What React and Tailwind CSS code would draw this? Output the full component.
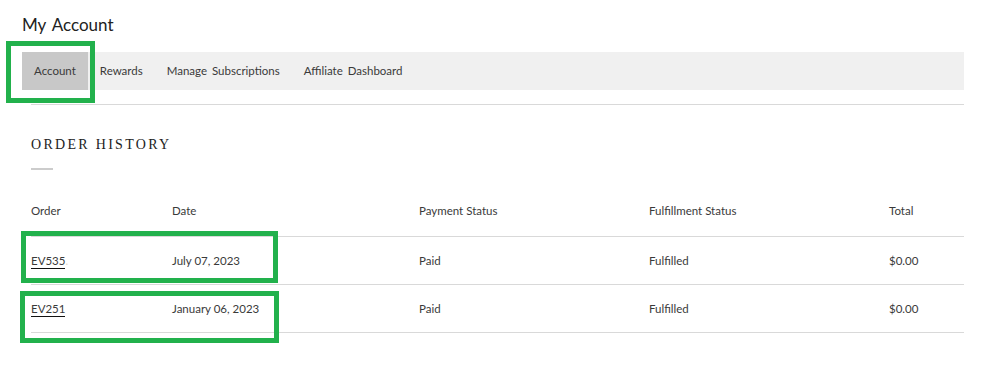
export default function App() {
  const font = { fontFamily: "Lato, 'Noto Sans', sans-serif" };
  const tabs = ["Account", "Rewards", "Manage Subscriptions", "Affiliate Dashboard"];
  const rows = [
    { id: "EV535", tail: ".", date: "July 07, 2023" },
    { id: "EV251", tail: "", date: "January 06, 2023" },
  ];
  return (
    <div className="relative w-[981px] h-[366px] bg-white overflow-hidden text-[#3a3a3a]" style={font}>
      <div className="pl-[22px] pr-[17px] pt-[14px]">
        <h1 className="text-[17px] leading-[22px] text-[#222] font-normal [word-spacing:2px]">My Account</h1>
        <nav className="mt-[16px] h-[38px] bg-[#f0f0f0] flex items-stretch text-[11.5px] [word-spacing:2px]">
          {tabs.map((t, i) => (
            <div
              key={t}
              className={`flex items-center px-[12px] ${i === 0 ? "bg-[#c8c8c8] px-[11px]" : ""}`}
            >
              {t}
            </div>
          ))}
        </nav>
        <div className="ml-[9px] mt-[14px] border-t border-[#d9d9d9]">
          <h2
            className="mt-[30px] text-[14px] leading-[20px] tracking-[2.3px] text-[#222] font-normal"
            style={{ fontFamily: "'Liberation Serif', serif" }}
          >
            ORDER HISTORY
          </h2>
          <div className="mt-[13px] w-[22px] h-[2px] bg-[#cccccc]" />
          <div className="mt-[16px] text-[11.5px]">
            <div className="grid grid-cols-[141px_247px_230px_240px_1fr] items-center h-[51px] border-b border-[#d9d9d9]">
              <div>Order</div>
              <div>Date</div>
              <div>Payment Status</div>
              <div>Fulfillment Status</div>
              <div>Total</div>
            </div>
            {rows.map((r) => (
              <div
                key={r.id}
                className="grid grid-cols-[141px_247px_230px_240px_1fr] items-center h-[48px] border-b border-[#d9d9d9]"
              >
                <div>
                  <span className="border-b border-[#111] pb-[1px]">{r.id}</span>
                  <span className="text-[#e8d8c8]">{r.tail}</span>
                </div>
                <div>{r.date}</div>
                <div>Paid</div>
                <div>Fulfilled</div>
                <div>$0.00</div>
              </div>
            ))}
          </div>
        </div>
      </div>
      <div className="absolute left-[6px] top-[41px] w-[89px] h-[62px] border-[5px] border-[#22b14c]" />
      <div className="absolute left-[21px] top-[231px] w-[257px] h-[52px] border-[5px] border-[#22b14c]" />
      <div className="absolute left-[20px] top-[291px] w-[259px] h-[52px] border-[5px] border-[#22b14c]" />
    </div>
  );
}
